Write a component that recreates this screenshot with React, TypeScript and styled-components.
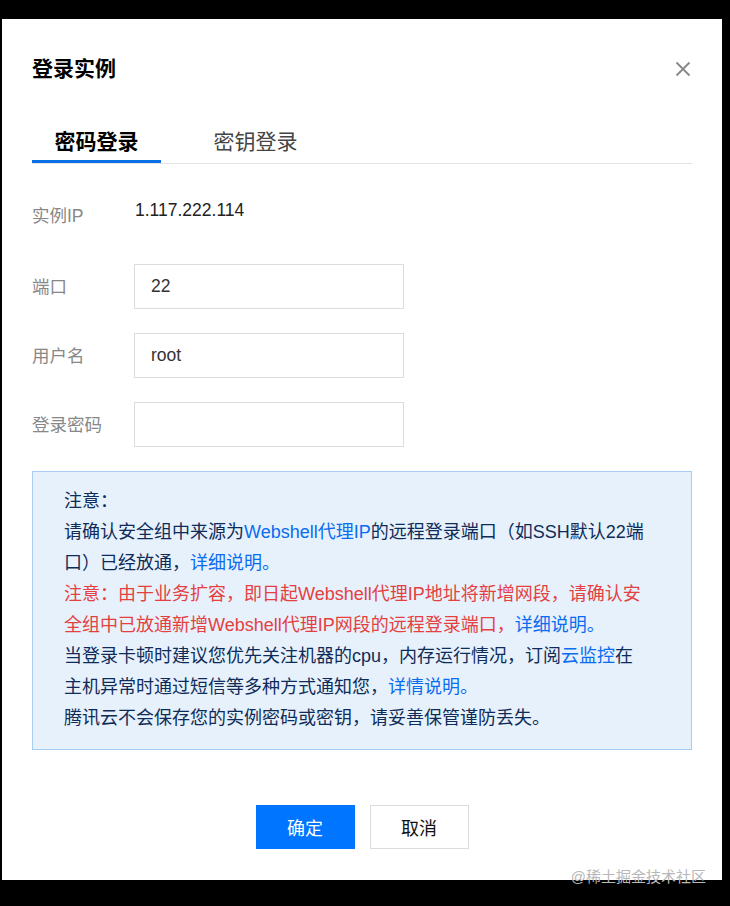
import React from "react";
import styled, { createGlobalStyle } from "styled-components";

const FONT = `"Liberation Sans", Arial, "Noto Sans CJK SC", sans-serif`;

const Global = createGlobalStyle`
  html, body { margin: 0; padding: 0; background: #000; }
  body { font-family: ${FONT}; }
  * { box-sizing: border-box; }
`;

const Screen = styled.div`
  width: 730px;
  height: 906px;
  background: #000;
  padding: 19px 0 0 2px;
`;

const Dialog = styled.div`
  position: relative;
  width: 720px;
  height: 861px;
  background: #fff;
  padding: 35px 30px 0;
  display: flex;
  flex-direction: column;
`;

const Header = styled.div`
  display: flex;
  align-items: center;
  justify-content: space-between;
  height: 30px;
`;

const Title = styled.h2`
  margin: 0;
  font-size: 21px;
  font-weight: 700;
  color: #000;
  line-height: 30px;
`;

const Close = styled.button`
  border: 0;
  background: none;
  padding: 0;
  width: 16px;
  height: 16px;
  margin-right: 1px;
  display: flex;
  cursor: pointer;
`;

const TabBar = styled.div`
  margin-top: 31px;
  display: flex;
  gap: 30px;
  border-bottom: 1px solid #e3e3e3;
`;

const Tab = styled.div<{ $active?: boolean }>`
  width: 129px;
  height: 48px;
  padding-top: 8px;
  line-height: 37px;
  text-align: center;
  font-size: 21px;
  font-weight: ${(p) => (p.$active ? 700 : 400)};
  color: ${(p) => (p.$active ? "#000" : "#444")};
  border-bottom: 3px solid ${(p) => (p.$active ? "#0b6fe6" : "transparent")};
`;

const Form = styled.div`
  display: flex;
  flex-direction: column;
  margin-top: 34px;
`;

const Row = styled.div<{ $gap?: number; $top?: boolean }>`
  display: flex;
  align-items: ${(p) => (p.$top ? "flex-start" : "center")};
  margin-top: ${(p) => p.$gap ?? 0}px;
`;

const Label = styled.div<{ $offset?: number }>`
  width: 102px;
  flex: none;
  font-size: 17.5px;
  line-height: 24px;
  color: #888;
  position: relative;
  top: ${(p) => p.$offset ?? 0}px;
`;

const Value = styled.div`
  font-size: 17.5px;
  color: #222;
  line-height: 24px;
  padding-left: 1px;
`;

const Input = styled.input`
  width: 270px;
  height: 45px;
  border: 1px solid #dcdcdc;
  padding: 0 16px;
  font-family: ${FONT};
  font-size: 17.5px;
  color: #333;
  outline: none;
  background: #fff;
`;

const Notice = styled.div`
  margin-top: 24px;
  background: #e6f1fc;
  border: 1px solid #a8cdf2;
  padding: 14px 20px 15px 31px;
  font-size: 18px;
  line-height: 31px;
  color: #0f2c58;
  white-space: nowrap;
`;

const Link = styled.span`
  color: #0a6cf0;
`;

const Warn = styled.span`
  color: #e5403f;
`;

const Footer = styled.div`
  margin-top: 55px;
  display: flex;
  justify-content: center;
  gap: 15px;
`;

const Button = styled.button<{ $primary?: boolean }>`
  width: 99px;
  height: 44px;
  font-family: ${FONT};
  font-size: 18px;
  border: 1px solid ${(p) => (p.$primary ? "#0075ff" : "#dcdcdc")};
  background: ${(p) => (p.$primary ? "#0075ff" : "#fff")};
  color: ${(p) => (p.$primary ? "#fff" : "#111")};
  cursor: pointer;
`;

const Watermark = styled.div`
  position: absolute;
  right: 16px;
  bottom: -8px;
  font-size: 15px;
  color: #b8b8b8;
  line-height: 22px;
`;

export default function App() {
  return (
    <>
      <Global />
      <Screen>
        <Dialog>
          <Header>
            <Title>登录实例</Title>
            <Close aria-label="关闭">
              <svg width="16" height="16" viewBox="0 0 16 16">
                <path d="M1.5 1.5 L14.5 14.5 M14.5 1.5 L1.5 14.5" stroke="#888" strokeWidth="1.8" />
              </svg>
            </Close>
          </Header>
          <TabBar>
            <Tab $active>密码登录</Tab>
            <Tab>密钥登录</Tab>
          </TabBar>
          <Form>
            <Row $top>
              <Label $offset={6}>实例IP</Label>
              <Value>1.117.222.114</Value>
            </Row>
            <Row $gap={42}>
              <Label>端口</Label>
              <Input defaultValue="22" />
            </Row>
            <Row $gap={24}>
              <Label>用户名</Label>
              <Input defaultValue="root" />
            </Row>
            <Row $gap={24}>
              <Label>登录密码</Label>
              <Input type="password" />
            </Row>
          </Form>
          <Notice>
            注意：
            <br />
            请确认安全组中来源为<Link>Webshell代理IP</Link>的远程登录端口（如SSH默认22端
            <br />
            口）已经放通，<Link>详细说明。</Link>
            <br />
            <Warn>注意：由于业务扩容，即日起Webshell代理IP地址将新增网段，请确认安</Warn>
            <br />
            <Warn>全组中已放通新增Webshell代理IP网段的远程登录端口，</Warn>
            <Link>详细说明。</Link>
            <br />
            当登录卡顿时建议您优先关注机器的cpu，内存运行情况，订阅<Link>云监控</Link>在
            <br />
            主机异常时通过短信等多种方式通知您，<Link>详情说明。</Link>
            <br />
            腾讯云不会保存您的实例密码或密钥，请妥善保管谨防丢失。
          </Notice>
          <Footer>
            <Button $primary>确定</Button>
            <Button>取消</Button>
          </Footer>
          <Watermark>@稀土掘金技术社区</Watermark>
        </Dialog>
      </Screen>
    </>
  );
}
